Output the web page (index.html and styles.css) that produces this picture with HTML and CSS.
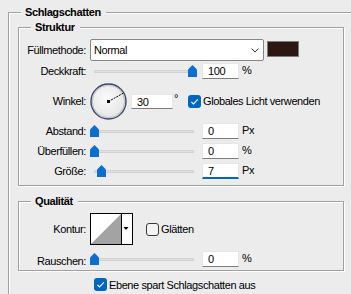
FILE: index.html
```html
<!DOCTYPE html>
<html lang="de">
<head>
    <meta charset="UTF-8">
    <title>Schlagschatten</title>
    <link rel="stylesheet" href="styles.css">
</head>
<body>

<fieldset class="group group-outer">
    <legend>Schlagschatten</legend>

    <fieldset class="group group-struktur">
        <legend>Struktur</legend>
        <div class="form form-struktur">
            <label class="lbl">Füllmethode:</label>
            <div class="ctrl">
                <div class="select">
                    <span>Normal</span>
                    <svg class="chev" width="8" height="5" viewBox="0 0 8 5"><polyline points="0.5,0.5 4,4 7.5,0.5" fill="none" stroke="#333" stroke-width="1"/></svg>
                </div>
                <div class="swatch"></div>
            </div>

            <label class="lbl">Deckkraft:</label>
            <div class="ctrl">
                <div class="slider">
                    <div class="track"></div>
                    <svg class="thumb" style="left:98px" width="9" height="12" viewBox="0 0 9 12"><path d="M0 4.5 L4.5 0 L9 4.5 V12 H0 Z"/></svg>
                </div>
                <div class="num">100</div>
                <span class="unit">%</span>
            </div>

            <label class="lbl">Winkel:</label>
            <div class="ctrl">
                <svg class="dial" width="37" height="37" viewBox="0 0 37 37">
                    <defs>
                        <radialGradient id="dialfill" cx="45%" cy="40%" r="60%">
                            <stop offset="0" stop-color="#fbfbfb"/>
                            <stop offset="1" stop-color="#e4e4e4"/>
                        </radialGradient>
                    </defs>
                    <circle cx="18.5" cy="18.5" r="17.5" fill="url(#dialfill)" stroke="#3d4866" stroke-width="1.4"/>
                    <circle cx="18.5" cy="18.5" r="16.2" fill="none" stroke="#a9afc0" stroke-width="0.8"/>
                    <line x1="18.5" y1="18.5" x2="33.5" y2="10" stroke="#000" stroke-width="1" stroke-dasharray="2 1"/>
                    <rect x="17" y="17" width="3" height="3" fill="#000"/>
                </svg>
                <div class="num num-wide">30</div>
                <span class="deg">°</span>
                <span class="check check-on check-gap">
                    <svg width="13" height="13" viewBox="0 0 13 13"><rect width="13" height="13" rx="3" fill="#0067c0"/><path d="M3.3 6.8 L5.5 9 L9.8 4.4" fill="none" stroke="#fff" stroke-width="1.1"/></svg>
                </span>
                <span class="check-text">Globales Licht verwenden</span>
            </div>

            <label class="lbl">Abstand:</label>
            <div class="ctrl">
                <div class="slider">
                    <div class="track"></div>
                    <svg class="thumb" style="left:0px" width="9" height="12" viewBox="0 0 9 12"><path d="M0 4.5 L4.5 0 L9 4.5 V12 H0 Z"/></svg>
                </div>
                <div class="num">0</div>
                <span class="unit">Px</span>
            </div>

            <label class="lbl">Überfüllen:</label>
            <div class="ctrl">
                <div class="slider">
                    <div class="track"></div>
                    <svg class="thumb" style="left:0px" width="9" height="12" viewBox="0 0 9 12"><path d="M0 4.5 L4.5 0 L9 4.5 V12 H0 Z"/></svg>
                </div>
                <div class="num">0</div>
                <span class="unit">%</span>
            </div>

            <label class="lbl">Größe:</label>
            <div class="ctrl">
                <div class="slider">
                    <div class="track"></div>
                    <svg class="thumb" style="left:7px" width="9" height="12" viewBox="0 0 9 12"><path d="M0 4.5 L4.5 0 L9 4.5 V12 H0 Z"/></svg>
                </div>
                <div class="num focused">7</div>
                <span class="unit">Px</span>
            </div>
        </div>
    </fieldset>

    <fieldset class="group group-qualitaet">
        <legend>Qualität</legend>
        <div class="form form-qualitaet">
            <label class="lbl">Kontur:</label>
            <div class="ctrl">
                <svg class="kontur" width="43" height="32" viewBox="0 0 43 32">
                    <rect x="0.5" y="0.5" width="42" height="31" fill="#fff" stroke="#000"/>
                    <polygon points="1,31 31,1 31,31" fill="#a3a3a3"/>
                    <line x1="31.5" y1="0" x2="31.5" y2="32" stroke="#000"/>
                    <polygon points="33.5,14 38.5,14 36,17" fill="#000"/>
                </svg>
                <span class="check check-glaetten">
                    <svg width="13" height="13" viewBox="0 0 13 13"><rect x="0.5" y="0.5" width="12" height="12" rx="2.5" fill="#f3f3f3" stroke="#3a3a3a"/></svg>
                </span>
                <span class="check-text">Glätten</span>
            </div>

            <label class="lbl">Rauschen:</label>
            <div class="ctrl">
                <div class="slider">
                    <div class="track"></div>
                    <svg class="thumb" style="left:0px" width="9" height="12" viewBox="0 0 9 12"><path d="M0 4.5 L4.5 0 L9 4.5 V12 H0 Z"/></svg>
                </div>
                <div class="num">0</div>
                <span class="unit">%</span>
            </div>
        </div>
    </fieldset>

    <div class="ebene">
        <span class="check check-on">
            <svg width="13" height="13" viewBox="0 0 13 13"><rect width="13" height="13" rx="3" fill="#0067c0"/><path d="M3.3 6.8 L5.5 9 L9.8 4.4" fill="none" stroke="#fff" stroke-width="1.1"/></svg>
        </span>
        <span class="check-text">Ebene spart Schlagschatten aus</span>
    </div>
</fieldset>

</body>
</html>
```

FILE: styles.css
```css
html, body {
    margin: 0;
    height: 294px;
    overflow: hidden;
}
body {
    font-family: "Liberation Sans", Arial, sans-serif;
    font-size: 11px;
    letter-spacing: -0.4px;
    color: #000;
    background-color: #ececec;
}

/* Gruppenrahmen, geaetzt wie unter Windows */
.group {
    margin: 0;
    padding: 0;
    min-inline-size: 0;
    border: 1px solid #a0a0a0;
    box-shadow: 1px 1px 0 #fff, inset 1px 1px 0 #fff;
}
.group legend {
    margin-left: 12px;
    padding: 0 5px 0 4px;
    font-weight: bold;
    line-height: 13px;
    background-color: #ececec;
}
/* der aeussere Rahmen laeuft rechts und unten aus dem Bild */
.group-outer {
    box-sizing: border-box;
    margin: 6px 0 0 8px;
    width: 343px;
    height: 288px;
    border-right: none;
    border-bottom: none;
    box-shadow: inset 1px 1px 0 #fff;
}
.group-struktur {
    margin: 2px 0 0 9px;
    width: 324px;
    padding: 5px 0 4px 0;
}
.group-qualitaet {
    margin: 9px 0 0 9px;
    width: 324px;
    padding: 5px 0 3px 0;
}

.form {
    display: grid;
    grid-template-columns: 67px 1fr;
    column-gap: 4px;
    align-items: center;
}
.form-struktur {
    grid-template-rows: 22px 20px 40px 20px 20px 20px;
}
.form-qualitaet {
    grid-template-rows: 32px 22px;
    align-items: end;
}
.form-qualitaet .lbl:first-child,
.form-qualitaet .ctrl:nth-child(2) {
    align-self: center;
}
.lbl {
    text-align: right;
    white-space: nowrap;
}
.ctrl {
    display: flex;
    align-items: center;
    white-space: nowrap;
}

.select {
    box-sizing: border-box;
    width: 174px;
    height: 22px;
    display: flex;
    align-items: center;
    padding-left: 3px;
    background-color: #fff;
    border: 1px solid #868686;
    border-radius: 2px;
}
.chev {
    margin-left: auto;
    margin-right: 4px;
}
.swatch {
    box-sizing: border-box;
    width: 32px;
    height: 16px;
    margin-left: 3px;
    margin-top: -2px;
    background-color: #2e1613;
    border: 1px solid #7c7c7c;
}

.slider {
    position: relative;
    width: 108px;
    height: 12px;
    margin-right: 4px;
}
.track {
    position: absolute;
    left: 4px;
    top: 5px;
    width: 100px;
    height: 3px;
    box-sizing: border-box;
    background-color: #e0e0e0;
    border: 1px solid #d2d2d2;
}
.thumb {
    position: absolute;
    top: 0;
    fill: #0b6fd2;
}

.num {
    box-sizing: border-box;
    width: 37px;
    height: 16px;
    line-height: 15px;
    padding-left: 5px;
    background-color: #fff;
    border: 1px solid #e6e6e6;
    border-bottom-color: #7d7d7d;
}
.num.focused {
    border-bottom: 2px solid #0067c0;
}
.num-wide {
    width: 42px;
    height: 15px;
    line-height: 14px;
    margin-left: 4px;
}
.unit {
    margin-left: 3px;
    margin-top: -3px;
}
.deg {
    margin-left: 1px;
    margin-top: -6px;
}

.check {
    display: flex;
    width: 13px;
    height: 13px;
}
.check-gap {
    margin-left: 10px;
}
.check-glaetten {
    margin-left: 13px;
}
.check-text {
    margin-left: 2px;
}

.ebene {
    display: flex;
    align-items: center;
    margin: 7px 0 0 85px;
}
```
